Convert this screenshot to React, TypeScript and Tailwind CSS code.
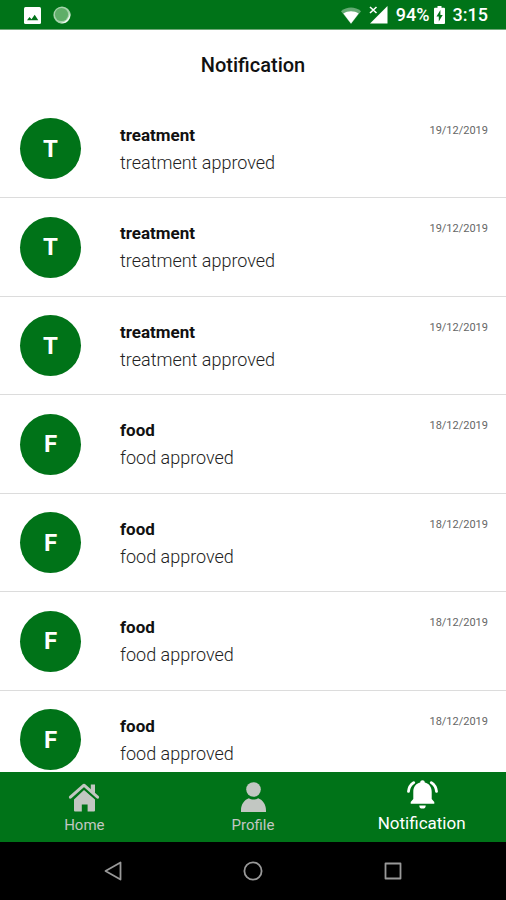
import { useState } from "react";
import type { ReactNode } from "react";

interface NotificationItem {
  id: number;
  title: string;
  message: string;
  date: string;
}

const NOTIFICATIONS: NotificationItem[] = [
  { id: 1, title: "treatment", message: "treatment approved", date: "19/12/2019" },
  { id: 2, title: "treatment", message: "treatment approved", date: "19/12/2019" },
  { id: 3, title: "treatment", message: "treatment approved", date: "19/12/2019" },
  { id: 4, title: "food", message: "food approved", date: "18/12/2019" },
  { id: 5, title: "food", message: "food approved", date: "18/12/2019" },
  { id: 6, title: "food", message: "food approved", date: "18/12/2019" },
  { id: 7, title: "food", message: "food approved", date: "18/12/2019" },
];

const TABS: { key: string; label: string; icon: ReactNode }[] = [
  {
    key: "home",
    label: "Home",
    icon: (
      <svg width="32" height="32" viewBox="0 0 32 32" fill="currentColor">
        <path d="M16 9 27 18.600V29.500a1 1 0 0 1-1 1h-6.400V23.500h-5.800v7H7a1 1 0 0 1-1-1V18.600z" />
        <path d="M2.400 16.200 16 4.400l13.600 11.800" fill="none" stroke="#007318" strokeWidth="6" />
        <path d="M22.800 3.500h4.200v9l-4.200-3.800z" />
        <path d="M2.400 16.200 16 4.200l13.600 12" fill="none" stroke="currentColor" strokeWidth="3" strokeLinecap="round" strokeLinejoin="round" />
      </svg>
    ),
  },
  {
    key: "profile",
    label: "Profile",
    icon: (
      <svg width="32" height="32" viewBox="0 0 32 32" fill="currentColor">
        <circle cx="16.500" cy="8.500" r="7.300" />
        <path d="M4 31v-1.500c0-6.500 3.800-10.800 7.800-12.200 2.600 1.700 6.800 1.700 9.400 0C25.200 18.700 29 23 29 29.500V31z" />
      </svg>
    ),
  },
  {
    key: "notification",
    label: "Notification",
    icon: (
      <svg width="32" height="32" viewBox="0 0 32 32" fill="currentColor">
        <path d="M16.500 1.200c1.300 0 2.200.9 2.300 2.200 4.300 1 6.900 4.300 6.900 9.300v7.200l2.600 3.200v1.700H4.700v-1.700l2.600-3.200v-7.200c0-5 2.600-8.300 6.900-9.300.1-1.300 1-2.200 2.300-2.200z" />
        <path d="M13.300 26.400h6.400a3.200 3.200 0 0 1-6.400 0z" />
        <path d="M7.700 3.600C4.500 5.600 2.800 8.600 2.500 12.400M25.300 3.600c3.200 2 4.900 5 5.200 8.800" fill="none" stroke="currentColor" strokeWidth="2.800" strokeLinecap="round" />
      </svg>
    ),
  },
];

function StatusBar() {
  return (
    <div className="flex h-[30px] shrink-0 items-center justify-between border-b border-[#6fa878] bg-[#007318] pt-px pr-[18px] pl-6 text-white">
      <div className="flex items-center gap-3">
        <svg width="17" height="17" viewBox="0 0 17 17">
          <rect width="17" height="17" rx="1.500" fill="#fff" />
          <path d="M3 13.200 5.500 10l2 2.200 3.200-4.400 3.600 5.400z" fill="#007318" />
        </svg>
        <svg width="18" height="18" viewBox="0 0 18 18">
          <circle cx="9" cy="9" r="8.600" fill="#a5d3ab" />
          <path d="M17 6.500A8.600 8.600 0 0 1 7 17.200 11 11 0 0 0 17 6.500z" fill="#f2faf3" />
          <circle cx="8.500" cy="8.500" r="6.600" fill="#5fae69" />
        </svg>
      </div>
      <div className="flex items-center gap-2 text-lg font-medium">
        <svg width="20" height="17" viewBox="0 0 20 17">
          <path d="M0 4.200C5.800-.6 14.200-.6 20 4.200L10 17z" fill="#fff" opacity=".4" />
          <path d="M2.400 6.400c4.400-3 10.800-3 15.200 0L10 16.500z" fill="#fff" />
        </svg>
        <svg width="19" height="18" viewBox="0 0 19 18">
          <path d="M18.500 0v17.500H1z" fill="#fff" />
          <path d="M0 0h9.500v7.500H0z" fill="#007318" />
          <path d="m1 1 6.500 6m0-6L1 7" stroke="#fff" strokeWidth="1.600" />
        </svg>
        <div className="flex items-center gap-1">
          <span>94%</span>
          <svg width="11" height="18" viewBox="0 0 11 18">
            <path d="M3.500 0h4v1.800H10a1 1 0 0 1 1 1V17a1 1 0 0 1-1 1H1a1 1 0 0 1-1-1V2.800a1 1 0 0 1 1-1h2.500z" fill="#fff" />
            <path d="M6.400 4 2.500 10.500h2.300V15.500L8.700 9H6.400z" fill="#007318" />
          </svg>
        </div>
        <span>3:15</span>
      </div>
    </div>
  );
}

function NotificationRow({ item }: { item: NotificationItem }) {
  return (
    <li className="flex h-[98px] items-center border-b border-[#dcdcdc] pr-[18px] pl-5 even:h-[99px]">
      <div className="flex size-[61px] shrink-0 items-center justify-center rounded-full bg-[#007318] text-2xl font-bold text-white uppercase">
        {item.title[0]}
      </div>
      <div className="ml-[39px] flex-1">
        <h2 className="text-[17px] leading-7 font-bold text-[#111]">{item.title}</h2>
        <p className="text-[18px] leading-7 font-light text-[#222]">{item.message}</p>
      </div>
      <time className="self-start pt-[23px] text-[11px] leading-4 text-[#666]">{item.date}</time>
    </li>
  );
}

export default function App() {
  const [active, setActive] = useState("notification");

  return (
    <div className="flex h-screen flex-col bg-white font-[Roboto,sans-serif]">
      <StatusBar />

      <header className="flex h-[70px] shrink-0 items-center justify-center">
        <h1 className="text-[20px] font-medium text-[#111]">Notification</h1>
      </header>

      <main className="min-h-0 flex-1 overflow-hidden">
        <ul>
          {NOTIFICATIONS.map((item) => (
            <NotificationRow key={item.id} item={item} />
          ))}
        </ul>
      </main>

      {/* Tab bar */}
      <nav className="grid h-[70px] shrink-0 grid-cols-3 bg-[#007318]">
        {TABS.map((tab) => (
          <button
            key={tab.key}
            onClick={() => setActive(tab.key)}
            className={`flex flex-col items-center justify-center leading-6 ${
              active === tab.key ? "text-[17px] text-white" : "pt-1 text-[15px] text-[#c2c7c2]"
            }`}
          >
            {tab.icon}
            {tab.label}
          </button>
        ))}
      </nav>

      {/* Android navigation */}
      <div className="flex h-[58px] shrink-0 items-center justify-center gap-[120px] bg-black text-[#999]">
        <button aria-label="Back">
          <svg width="20" height="20" viewBox="0 0 20 20" fill="none" stroke="currentColor" strokeWidth="1.800" strokeLinejoin="round">
            <path d="M17.500 1.500v17L2.500 10z" />
          </svg>
        </button>
        <button aria-label="Home screen">
          <svg width="20" height="20" viewBox="0 0 20 20" fill="none" stroke="currentColor" strokeWidth="1.800">
            <circle cx="10" cy="10" r="8.600" />
          </svg>
        </button>
        <button aria-label="Recent apps">
          <svg width="20" height="20" viewBox="0 0 20 20" fill="none" stroke="currentColor" strokeWidth="1.800" strokeLinejoin="round">
            <rect x="2.500" y="2.500" width="15" height="15" />
          </svg>
        </button>
      </div>
    </div>
  );
}
